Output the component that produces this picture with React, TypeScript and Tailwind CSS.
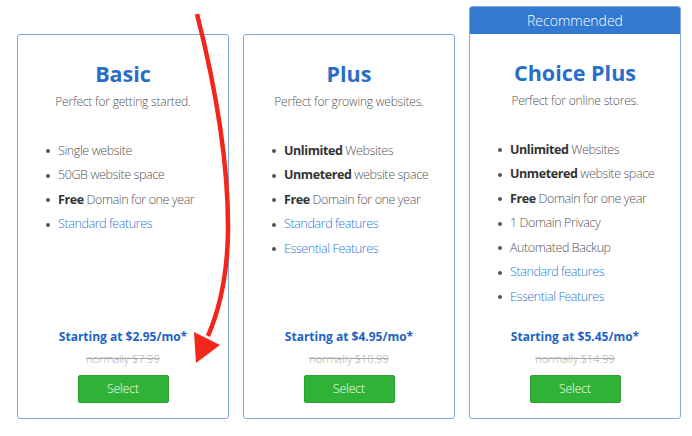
import React from 'react';

interface Feature {
  bold?: string;
  text: string;
  link?: boolean;
}

interface Plan {
  name: string;
  tagline: string;
  features: Feature[];
  price: string;
  normally: string;
  recommended?: boolean;
}

const plans: Plan[] = [
  {
    name: 'Basic',
    tagline: 'Perfect for getting started.',
    features: [
      { text: 'Single website' },
      { text: '50GB website space' },
      { bold: 'Free', text: ' Domain for one year' },
      { text: 'Standard features', link: true },
    ],
    price: 'Starting at $2.95/mo*',
    normally: 'normally $7.99',
  },
  {
    name: 'Plus',
    tagline: 'Perfect for growing websites.',
    features: [
      { bold: 'Unlimited', text: ' Websites' },
      { bold: 'Unmetered', text: ' website space' },
      { bold: 'Free', text: ' Domain for one year' },
      { text: 'Standard features', link: true },
      { text: 'Essential Features', link: true },
    ],
    price: 'Starting at $4.95/mo*',
    normally: 'normally $10.99',
  },
  {
    name: 'Choice Plus',
    tagline: 'Perfect for online stores.',
    features: [
      { bold: 'Unlimited', text: ' Websites' },
      { bold: 'Unmetered', text: ' website space' },
      { bold: 'Free', text: ' Domain for one year' },
      { text: '1 Domain Privacy' },
      { text: 'Automated Backup' },
      { text: 'Standard features', link: true },
      { text: 'Essential Features', link: true },
    ],
    price: 'Starting at $5.45/mo*',
    normally: 'normally $14.99',
    recommended: true,
  },
];

function PlanCard({ plan }: { plan: Plan }) {
  return (
    <div
      className={`w-[212px] flex flex-col border border-[#7fa9e3] rounded-[3px] bg-white overflow-hidden ${
        plan.recommended ? '' : 'mt-[28px]'
      }`}
    >
      {plan.recommended && (
        <div className="h-[28px] -mx-px -mt-px bg-[#3279d1] text-white text-[14px] font-light flex items-center justify-center">
          Recommended
        </div>
      )}
      <div className="flex flex-col flex-1 pt-[25px] pb-[15px]">
        <h2 className="text-center text-[21.5px] leading-[28px] font-bold text-[#2a6dc9]">{plan.name}</h2>
        <p className="text-center text-[12px] font-light leading-[18px] mt-[5px] text-[#555] tracking-[-0.2px]">
          {plan.tagline}
        </p>
        <ul className="mt-[28px]">
          {plan.features.map((f, i) => (
            <li key={i} className="flex items-center h-[24.5px] text-[12.5px] font-light tracking-[-0.4px]">
              <span className="w-[4px] h-[4px] rounded-full bg-[#555] ml-[28px] mr-[8px]" />
              <span className={f.link ? 'text-[#2f78d6]' : 'text-[#555]'}>
                {f.bold && <b className="font-bold text-[#333]">{f.bold}</b>}
                {f.text}
              </span>
            </li>
          ))}
        </ul>
        <div className="mt-auto flex flex-col items-center">
          <div className="text-[12px] font-bold text-[#2063c4] leading-[20px]">{plan.price}</div>
          <div className="text-[11px] font-light text-[#aaa] line-through leading-[18px] mt-[3px]">{plan.normally}</div>
          <button className="mt-[7px] w-[91px] h-[28px] rounded-[2px] bg-[#2fb236] border border-[#27a02d] text-white text-[12px] font-light">
            Select
          </button>
        </div>
      </div>
    </div>
  );
}

export default function App() {
  return (
    <div
      className="relative w-[692px] h-[436px] bg-white overflow-hidden"
      style={{ fontFamily: '"Open Sans", "Noto Sans", sans-serif' }}
    >
      <div className="flex gap-[14px] pl-[17px] pt-[6px] h-[419px]">
        {plans.map(p => (
          <PlanCard key={p.name} plan={p} />
        ))}
      </div>
      <svg className="absolute left-0 top-0 pointer-events-none" width="692" height="436">
        <path
          d="M197 14 Q 229 140 228 232 Q 227 292 208 336"
          fill="none"
          stroke="#f3261b"
          strokeWidth="4.5"
        />
        <polygon points="194,332 220,345 196,363" fill="#f3261b" />
      </svg>
    </div>
  );
}
